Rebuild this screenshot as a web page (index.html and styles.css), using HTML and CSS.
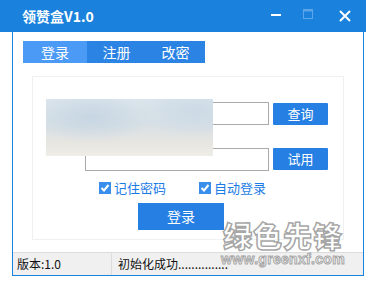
FILE: index.html
```html
<!DOCTYPE html>
<html>
<head>
<meta charset="utf-8">
<link rel="stylesheet" href="styles.css">
</head>
<body>
<div class="titlebar">
  <div class="title">领赞盒V1.0</div>
  <div class="controls">
    <svg class="ctl" width="12" height="12" viewBox="0 0 12 12"><rect x="1" y="4" width="10" height="2" fill="#fff"/></svg>
    <svg class="ctl max" width="12" height="12" viewBox="0 0 12 12"><rect x="1.5" y="0.5" width="9" height="9" fill="none" stroke="#5ea4ea"/><rect x="1.5" y="0.5" width="9" height="2" fill="#5ea4ea"/></svg>
    <svg class="ctl close" width="12" height="12" viewBox="0 0 12 12"><path d="M1 1 L11 11 M11 1 L1 11" stroke="#fff" stroke-width="2"/></svg>
  </div>
</div>
<div class="frame">
  <div class="main">
    <div class="tabs">
      <div class="tab active">登录</div>
      <div class="tab t2">注册</div>
      <div class="tab t3">改密</div>
    </div>
    <div class="panel">
      <div class="row r1">
        <div class="input"></div>
        <div class="btn">查询</div>
      </div>
      <div class="row r2">
        <div class="input"></div>
        <div class="btn">试用</div>
      </div>
      <div class="checks">
        <label class="chk"><span class="box"><svg width="12" height="12" viewBox="0 0 12 12"><path d="M2.5 6 L5 8.5 L9.5 3" stroke="#fff" stroke-width="2" fill="none"/></svg></span>记住密码</label>
        <label class="chk"><span class="box"><svg width="12" height="12" viewBox="0 0 12 12"><path d="M2.5 6 L5 8.5 L9.5 3" stroke="#fff" stroke-width="2" fill="none"/></svg></span>自动登录</label>
      </div>
      <div class="loginrow"><div class="login">登录</div></div>
      <div class="blur"></div>
    </div>
  </div>
  <div class="status">
    <div class="cell c1">版本:1.0</div>
    <div class="cell c2">初始化成功...............</div>
  </div>
  <div class="wm">
    <div class="wm1">绿色先锋</div>
    <div class="wm2">www.greenxf.com</div>
  </div>
</div>
</body>
</html>
```
FILE: styles.css
```css
* { box-sizing: border-box; }
html, body { margin: 0; padding: 0; background: #fff; }
body {
  width: 366px; height: 283px; overflow: hidden;
  font-family: "Noto Sans CJK SC", "Noto Sans", sans-serif;
}
.titlebar {
  height: 32px; background: #1a82dc; display: flex; align-items: center;
  justify-content: space-between; padding-left: 22px;
}
.title { color: #fff; font-weight: bold; font-size: 14px; line-height: 16px; }
.controls { display: flex; align-items: center; padding-right: 15px; }
.ctl { display: block; }
.max { margin-left: 20px; margin-top: -2px; }
.close { margin-left: 25px; }
.frame {
  position: relative;
  margin-left: 12px; width: 352px; height: 244px;
  border: 1px solid #1a82dc; border-top: none;
  display: flex; flex-direction: column;
}
.main { flex: 1; padding: 9px 0 0 10px; }
.tabs { display: flex; height: 22px; }
.tab {
  color: #fff; font-size: 14px; line-height: 22px; text-align: center;
  background: #2b84e4; width: 59px;
}
.tab.active { background: #4b9af6; width: 64px; }
.panel {
  position: relative;
  margin: 13px 0 0 9px; width: 312px; height: 164px;
  border: 1px solid #eef0f2; padding: 24px 0 0 52px;
}
.row { display: flex; align-items: center; }
.r2 { margin-top: 23px; }
.input { width: 184px; height: 23px; border: 1px solid #aaaaaa; background: #fff; }
.btn {
  margin-left: 4px; width: 55px; height: 22px; background: #2680e4; color: #fff;
  font-size: 13px; line-height: 22px; text-align: center; border-radius: 1px;
}
.r1 .btn { margin-top: 2px; }
.r2 .btn { margin-top: -2px; }
.checks { display: flex; margin: 9px 0 0 14px; }
.chk {
  display: flex; align-items: center; color: #1a7be6; font-size: 13px; line-height: 16px;
}
.chk + .chk { margin-left: 33px; }
.box {
  width: 12px; height: 12px; background: #3b8fec; margin-right: 3px; display: block;
}
.box svg { display: block; }
.loginrow { padding-left: 53px; margin-top: 7px; }
.login {
  width: 86px; height: 27px; background: #2680e4; color: #fff; font-size: 14px;
  line-height: 27px; text-align: center;
}
.blur {
  position: absolute; left: 13px; top: 22px; width: 167px; height: 57px;
  background:
    radial-gradient(ellipse 60px 25px at 45px 18px, rgba(196,213,226,0.9), rgba(196,213,226,0)),
    radial-gradient(ellipse 60px 25px at 150px 12px, rgba(200,216,228,0.8), rgba(200,216,228,0)),
    linear-gradient(180deg, #dbe5ec 0%, #d8e0e6 45%, #e8e6e0 80%, #efede8 100%);
}
.status {
  height: 23px; background: #f0f0f0; border-top: 1px solid #dcdcdc;
  display: flex; font-size: 12px; color: #111; line-height: 21px;
}
.cell { padding-left: 4px; }
.c1 { width: 99px; border-right: 1px solid #dcdcdc; }
.c2 { padding-left: 6px; }
.wm { position: absolute; left: 204px; top: 188px; width: 132px; text-align: center; }
.wm1 {
  font-size: 29px; font-weight: 900; line-height: 30px; letter-spacing: 1px;
  color: rgba(255,255,255,0.55); -webkit-text-stroke: 1.5px rgba(150,150,150,0.85);
}
.wm2 {
  font-family: "Liberation Sans", sans-serif; font-weight: bold;
  font-size: 14px; line-height: 16px; margin-top: 1px; letter-spacing: 0.3px;
  color: rgba(255,255,255,0.5); -webkit-text-stroke: 1px rgba(150,150,150,0.85);
}
```
